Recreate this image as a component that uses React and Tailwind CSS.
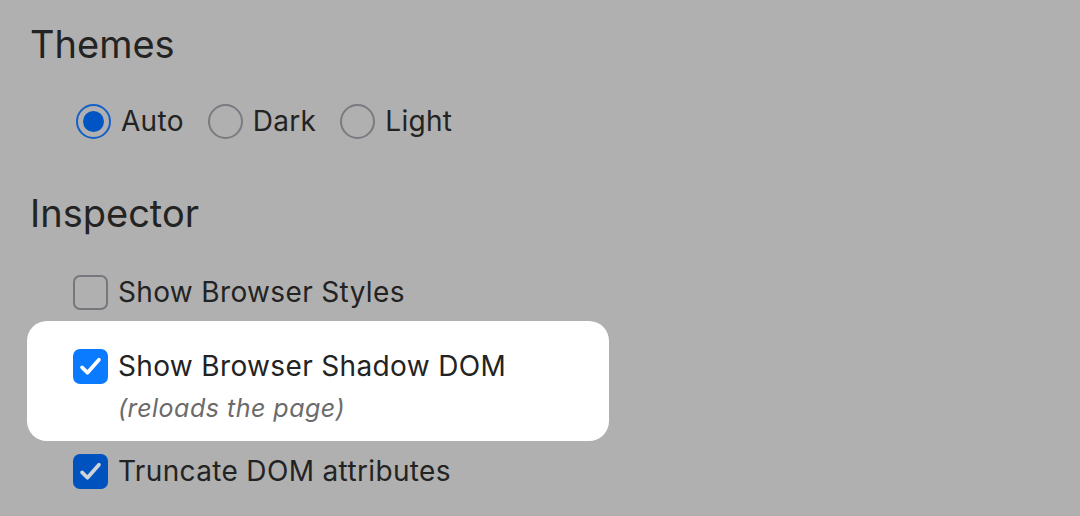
const Check = ({ color }) => (
  <svg viewBox="0 0 24 24" className="w-[27px] h-[27px]" fill="none">
    <path
      d="M4.5 12.8l4.8 4.8L19.5 6"
      stroke={color}
      strokeWidth="3.3"
      strokeLinecap="round"
      strokeLinejoin="round"
    />
  </svg>
);

const Radio = ({ label, checked }) => (
  <label className="flex items-center gap-[10px]">
    <span
      className={
        checked
          ? "w-[35px] h-[35px] rounded-full border-[2px] border-[#1560c8] flex items-center justify-center"
          : "w-[35px] h-[35px] rounded-full border-[2px] border-[#7a7a80]"
      }
    >
      {checked && <span className="w-[21px] h-[21px] rounded-full bg-[#0054c4]" />}
    </span>
    <span>{label}</span>
  </label>
);

const Checkbox = ({ state }) => {
  if (state === "off")
    return <span className="w-[35px] h-[35px] rounded-[7px] border-[2px] border-[#76767c] shrink-0" />;
  if (state === "active")
    return (
      <span className="w-[35px] h-[35px] rounded-[7px] bg-[#0a7aff] flex items-center justify-center shrink-0">
        <Check color="#ffffff" />
      </span>
    );
  return (
    <span className="w-[35px] h-[35px] rounded-[7px] bg-[#0052bf] flex items-center justify-center shrink-0">
      <Check color="#cfd3da" />
    </span>
  );
};

export default function App() {
  return (
    <div
      className="w-[1080px] h-[516px] bg-[#b0b0b0] text-[#232323] overflow-hidden"
      style={{ fontFamily: "Inter, 'Noto Sans', sans-serif" }}
    >
      <div className="pl-[30px] pt-[22px]">
        <h2 className="text-[38px] leading-[44px]">Themes</h2>
        <div className="flex items-center gap-[24px] pl-[46px] mt-[37px] text-[28px] leading-[36px] tracking-[0.3px]">
          <Radio label="Auto" checked />
          <Radio label="Dark" />
          <Radio label="Light" />
        </div>

        <h2 className="text-[38px] leading-[44px] mt-[52px]">Inspector</h2>

        <div className="text-[28px] leading-[36px] tracking-[0.35px] mt-[39px]">
          <div className="flex items-center gap-[10px] pl-[43px] h-[36px]">
            <Checkbox state="off" />
            <span>Show Browser Styles</span>
          </div>

          <div className="ml-[-3px] mt-[11px] w-[582px] h-[120px] bg-white rounded-[20px] pl-[46px] pt-[27px]">
            <div className="flex items-center gap-[10px] h-[36px]">
              <Checkbox state="active" />
              <span>Show Browser Shadow DOM</span>
            </div>
            <div className="pl-[45px] mt-[8px] text-[25px] leading-[32px] tracking-[0.5px] italic text-[#6b6b6b]">
              (reloads the page)
            </div>
          </div>

          <div className="flex items-center gap-[10px] pl-[43px] h-[36px] mt-[12px]">
            <Checkbox state="dim" />
            <span>Truncate DOM attributes</span>
          </div>
        </div>
      </div>
    </div>
  );
}
